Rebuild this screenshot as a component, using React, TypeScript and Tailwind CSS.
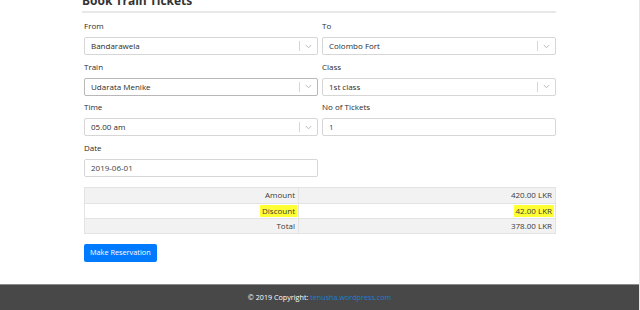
function Chevron() {
    return (
        <svg width="7" height="5" viewBox="0 0 7 5" className="text-[#b3b3b3]">
            <path d="M0.8 1 L3.5 3.8 L6.2 1" fill="none" stroke="currentColor" strokeWidth="0.9" />
        </svg>
    );
}

function Select({ value, focused }: { value: string; focused?: boolean }) {
    return (
        <div className={`flex items-center h-[18px] rounded-[2px] border bg-white ${focused ? 'border-[#b8b8b8]' : 'border-[#d6d6d6]'}`}>
            <span className="flex-1 pl-[6px] text-[8px] text-[#2b2b2b]">{value}</span>
            <span className="w-px h-[10px] bg-[#d6d6d6]" />
            <span className="w-[17px] flex justify-center"><Chevron /></span>
        </div>
    );
}

function Input({ value }: { value: string }) {
    return (
        <div className="flex items-center h-[18px] rounded-[2px] border border-[#d6d6d6] bg-white pl-[6px] text-[8px] text-[#3d4349]">
            {value}
        </div>
    );
}

function Field({ label, children }: { label: string; children: React.ReactNode }) {
    return (
        <div className="flex flex-col">
            <label className="text-[8px] leading-[10px] text-[#2b2b2b] mb-[6px]">{label}</label>
            {children}
        </div>
    );
}

export default function App() {
    const rows = [
        { label: 'Amount', value: '420.00 LKR', stripe: true },
        { label: 'Discount', value: '42.00 LKR', stripe: false, mark: true },
        { label: 'Total', value: '378.00 LKR', stripe: true },
    ];

    return (
        <div className="w-[640px] h-[310px] bg-white flex flex-col overflow-hidden border-r border-[#e6e6e6]" style={{ fontFamily: '"Open Sans", "Noto Sans", sans-serif' }}>
            <div className="flex-1 pl-[82px] pr-[83px]">
                <h2 className="text-[12px] leading-[12px] font-bold text-[#333] -mt-[5px]">Book Train Tickets</h2>
                <div className="h-[2px] bg-[#e8e8e8] mt-[4px]" />
                <div className="pl-[2px] pr-0 grid grid-cols-2 gap-x-[4px] gap-y-[6.5px] mt-[8px]">
                    <Field label="From"><Select value="Bandarawela" /></Field>
                    <Field label="To"><Select value="Colombo Fort" /></Field>
                    <Field label="Train"><Select value="Udarata Menike" focused /></Field>
                    <Field label="Class"><Select value="1st class" /></Field>
                    <Field label="Time"><Select value="05.00 am" /></Field>
                    <Field label="No of Tickets"><Input value="1" /></Field>
                    <Field label="Date"><Input value="2019-06-01" /></Field>
                </div>
                <div className="ml-[2px] mt-[10px] border border-[#e3e3e3] text-[8px] text-[#3a3a3a]">
                    {rows.map((r, i) => (
                        <div key={r.label} className={`flex h-[15px] items-center ${r.stripe ? 'bg-[#f2f2f2]' : 'bg-white'} ${i > 0 ? 'border-t border-[#e3e3e3]' : ''}`}>
                            <div className="w-[214px] h-full flex items-center justify-end pr-[3px] border-r border-[#e3e3e3]">
                                <span className={r.mark ? 'bg-[#ffff33] px-[2px] -mr-[2px]' : ''}>{r.label}</span>
                            </div>
                            <div className="flex-1 flex justify-end pr-[3px]">
                                <span className={r.mark ? 'bg-[#ffff33] px-[2px] -mr-[2px]' : ''}>{r.value}</span>
                            </div>
                        </div>
                    ))}
                </div>
                <button className="ml-[2px] mt-[10px] h-[18px] px-[6px] rounded-[2px] bg-[#007bff] text-white text-[7.3px]">Make Reservation</button>
            </div>
            <footer className="h-[26px] bg-[#484848] border-t border-[#8c8c8c] flex items-center justify-center text-[7.2px] font-medium text-white">
                <span>© 2019 Copyright: <a className="text-[#1e7bd8]">tenusha.wordpress.com</a></span>
            </footer>
        </div>
    );
}
